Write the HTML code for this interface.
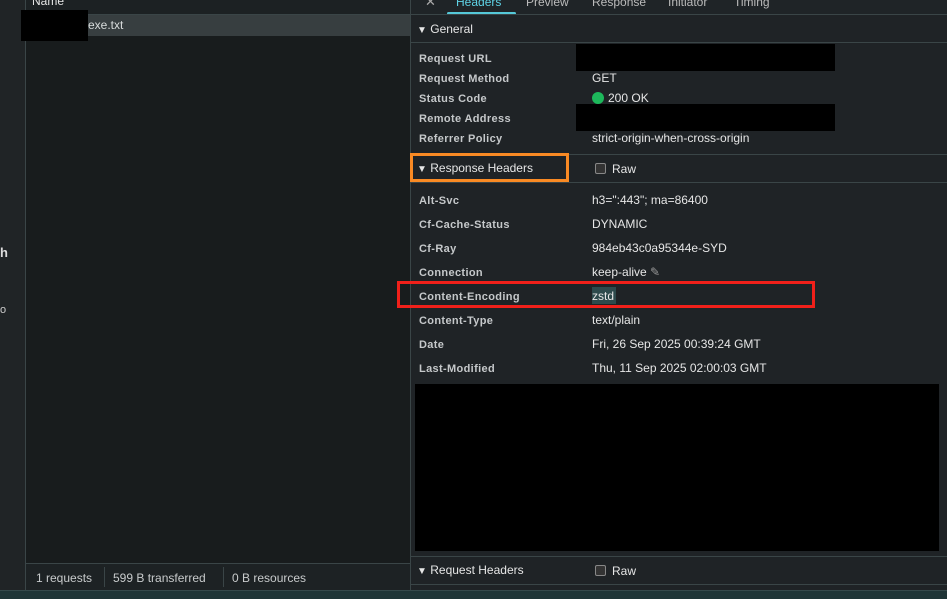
<!DOCTYPE html>
<html><head><style>
*{margin:0;padding:0;box-sizing:border-box}
body{width:947px;height:599px;overflow:hidden;background:#1f2326;font-family:"Liberation Sans",sans-serif;position:relative;color:#e3e3e3}
.a{position:absolute;white-space:nowrap}
.k{font-size:11px;color:#c5c8ca;font-weight:bold;letter-spacing:0.35px;margin-top:1px}
.v{font-size:12px;color:#e6e6e6}
.hl{position:absolute;height:1px;background:#3a4547}
.tri{font-size:10px}
</style></head><body>
<div class="a" style="left:0;top:0;width:25px;height:590px;background:#202426"></div>
<div class="a" style="left:25px;top:0;width:1px;height:590px;background:#3a4547"></div>
<div class="a" style="left:26px;top:0;width:384px;height:590px;background:#181c1d"></div>
<div class="a" style="left:26px;top:0;width:384px;height:14px;background:#1c2123"></div>
<div class="a v" style="left:32px;top:-6px;font-size:12px">Name</div>
<div class="hl" style="left:26px;top:14px;width:384px"></div>
<div class="a" style="left:26px;top:15px;width:384px;height:21px;background:#373e40"></div>
<div class="a" style="left:21px;top:10px;width:67px;height:31px;background:#000"></div>
<div class="a v" style="left:88px;top:18px;font-size:12px;color:#d8dcdc">exe.txt</div>
<div class="a" style="left:0;top:245px;font-size:13px;font-weight:bold;color:#ddd">h</div>
<div class="a" style="left:0;top:304px;font-size:11px;color:#ccc">o</div>
<div class="hl" style="left:26px;top:563px;width:384px"></div>
<div class="a" style="left:26px;top:564px;width:384px;height:26px;background:#1d2224"></div>
<div class="a v" style="left:36px;top:571px;font-size:12px;color:#c8cbcc">1 requests</div>
<div class="a" style="left:104px;top:567px;width:1px;height:20px;background:#3a4547"></div>
<div class="a v" style="left:113px;top:571px;font-size:12px;color:#c8cbcc">599 B transferred</div>
<div class="a" style="left:223px;top:567px;width:1px;height:20px;background:#3a4547"></div>
<div class="a v" style="left:232px;top:571px;font-size:12px;color:#c8cbcc">0 B resources</div>
<div class="a" style="left:410px;top:0;width:1px;height:590px;background:#3a4547"></div>
<div class="a" style="left:411px;top:0;width:536px;height:14px;background:#1f2427"></div>
<div class="a v" style="left:425px;top:-6px;font-size:13px;color:#aaa">✕</div>
<div class="a v" style="left:456px;top:-5px;color:#5fd3e6">Headers</div>
<div class="a" style="left:447px;top:12px;width:69px;height:3px;background:#55c8d8;border-radius:2px"></div>
<div class="a v" style="left:526px;top:-5px;color:#bbb">Preview</div>
<div class="a v" style="left:592px;top:-5px;color:#bbb">Response</div>
<div class="a v" style="left:668px;top:-5px;color:#bbb">Initiator</div>
<div class="a v" style="left:734px;top:-5px;color:#bbb">Timing</div>
<div class="hl" style="left:411px;top:14px;width:536px"></div>
<div class="a v" style="left:417px;top:22px;font-size:12px"><span class="tri">▼</span> General</div>
<div class="hl" style="left:411px;top:42px;width:536px"></div>
<div class="a k" style="left:419px;top:52px">Request URL</div>
<div class="a k" style="left:419px;top:72px">Request Method</div>
<div class="a k" style="left:419px;top:92px">Status Code</div>
<div class="a k" style="left:419px;top:112px">Remote Address</div>
<div class="a k" style="left:419px;top:132px">Referrer Policy</div>
<div class="a" style="left:576px;top:44px;width:259px;height:27px;background:#000"></div>
<div class="a v" style="left:592px;top:71px">GET</div>
<div class="a" style="left:592px;top:92px;width:12px;height:12px;border-radius:50%;background:#1db85b"></div>
<div class="a v" style="left:608px;top:91px">200 OK</div>
<div class="a" style="left:576px;top:104px;width:259px;height:27px;background:#000"></div>
<div class="a v" style="left:592px;top:131px">strict-origin-when-cross-origin</div>
<div class="hl" style="left:411px;top:154px;width:536px"></div>
<div class="a" style="left:410px;top:153px;width:159px;height:29px;border:3px solid #f98a24"></div>
<div class="a v" style="left:417px;top:161px"><span class="tri">▼</span> Response Headers</div>
<div class="a" style="left:595px;top:163px;width:11px;height:11px;border:1px solid #888;border-radius:2px;background:#333"></div>
<div class="a v" style="left:612px;top:162px">Raw</div>
<div class="hl" style="left:411px;top:182px;width:536px"></div>
<div class="a k" style="left:419px;top:194px">Alt-Svc</div>
<div class="a k" style="left:419px;top:218px">Cf-Cache-Status</div>
<div class="a k" style="left:419px;top:242px">Cf-Ray</div>
<div class="a k" style="left:419px;top:266px">Connection</div>
<div class="a k" style="left:419px;top:290px">Content-Encoding</div>
<div class="a k" style="left:419px;top:314px">Content-Type</div>
<div class="a k" style="left:419px;top:338px">Date</div>
<div class="a k" style="left:419px;top:362px">Last-Modified</div>
<div class="a v" style="left:592px;top:193px">h3=":443"; ma=86400</div>
<div class="a v" style="left:592px;top:217px">DYNAMIC</div>
<div class="a v" style="left:592px;top:241px">984eb43c0a95344e-SYD</div>
<div class="a v" style="left:592px;top:265px">keep-alive <span style="color:#999">✎</span></div>
<div class="a" style="left:592px;top:287px;width:24px;height:17px;background:#2d4a4c"></div>
<div class="a v" style="left:592px;top:289px">zstd</div>
<div class="a v" style="left:592px;top:313px">text/plain</div>
<div class="a v" style="left:592px;top:337px">Fri, 26 Sep 2025 00:39:24 GMT</div>
<div class="a v" style="left:592px;top:361px">Thu, 11 Sep 2025 02:00:03 GMT</div>
<div class="a" style="left:397px;top:281px;width:418px;height:27px;border:3px solid #f0201a"></div>
<div class="a" style="left:415px;top:384px;width:524px;height:167px;background:#000"></div>
<div class="hl" style="left:411px;top:556px;width:536px"></div>
<div class="a v" style="left:417px;top:563px"><span class="tri">▼</span> Request Headers</div>
<div class="a" style="left:595px;top:565px;width:11px;height:11px;border:1px solid #888;border-radius:2px;background:#333"></div>
<div class="a v" style="left:612px;top:564px">Raw</div>
<div class="hl" style="left:411px;top:584px;width:536px"></div>
<div class="a" style="left:0;top:590px;width:947px;height:9px;background:#1f3537;border-top:1px solid #35494b"></div>
</body></html>
